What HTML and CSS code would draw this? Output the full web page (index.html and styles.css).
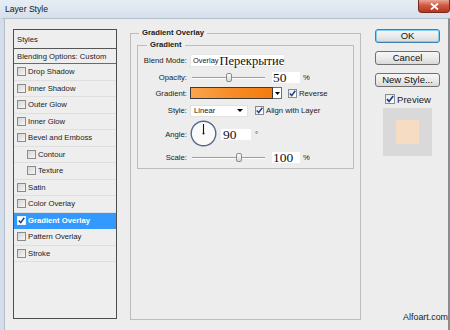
FILE: index.html
```html
<!DOCTYPE html>
<html>
<head>
<meta charset="utf-8">
<link rel="stylesheet" href="styles.css">
</head>
<body>
<div class="window">
  <div class="titlebar">
    <span class="title">Layer Style</span>
    <span class="close"><svg width="9" height="7" viewBox="0 0 9 7"><path d="M1 0.5 L8 6.5 M8 0.5 L1 6.5" stroke="#fff" stroke-width="1.8"/></svg></span>
  </div>
  <div class="frame">
    <div class="styles-list">
      <div class="list-head">Styles</div>
      <div class="list-blend">Blending Options: Custom</div>
      <div class="item"><span class="cb"></span>Drop Shadow</div>
      <div class="item"><span class="cb"></span>Inner Shadow</div>
      <div class="item"><span class="cb"></span>Outer Glow</div>
      <div class="item"><span class="cb"></span>Inner Glow</div>
      <div class="item"><span class="cb"></span>Bevel and Emboss</div>
      <div class="item sub"><span class="cb"></span>Contour</div>
      <div class="item sub"><span class="cb"></span>Texture</div>
      <div class="item"><span class="cb"></span>Satin</div>
      <div class="item"><span class="cb"></span>Color Overlay</div>
      <div class="item selected"><span class="cb on"><svg width="7" height="7" viewBox="0 0 7 7"><path d="M0.8 3.6 L2.7 5.6 L6.3 0.8" fill="none" stroke="#1f3f8f" stroke-width="1.5"/></svg></span>Gradient Overlay</div>
      <div class="item"><span class="cb"></span>Pattern Overlay</div>
      <div class="item"><span class="cb"></span>Stroke</div>
    </div>

    <fieldset class="group outer">
      <legend>Gradient Overlay</legend>
      <fieldset class="group inner">
        <legend>Gradient</legend>
        <div class="row r-blend">
          <span class="lbl">Blend Mode:</span>
          <div class="blend-box"><span class="small">Overlay</span><span class="ru">Перекрытие</span></div>
        </div>
        <div class="row r-opacity">
          <span class="lbl">Opacity:</span>
          <div class="slider"><span class="thumb" style="left:51%"></span></div>
          <span class="num">50</span><span class="unit">%</span>
        </div>
        <div class="row r-gradient">
          <span class="lbl">Gradient:</span>
          <div class="grad"></div>
          <div class="grad-btn"><svg width="5" height="3" viewBox="0 0 5 3"><path d="M0 0 H5 L2.5 3 Z" fill="#000"/></svg></div>
          <span class="cb on rev"><svg width="7" height="7" viewBox="0 0 7 7"><path d="M0.8 3.6 L2.7 5.6 L6.3 0.8" fill="none" stroke="#1f3f8f" stroke-width="1.5"/></svg></span><span class="cbl">Reverse</span>
        </div>
        <div class="row r-style">
          <span class="lbl">Style:</span>
          <div class="select"><span>Linear</span><svg width="6" height="3" viewBox="0 0 6 3"><path d="M0 0 H6 L3 3 Z" fill="#000"/></svg></div>
          <span class="cb on align"><svg width="7" height="7" viewBox="0 0 7 7"><path d="M0.8 3.6 L2.7 5.6 L6.3 0.8" fill="none" stroke="#1f3f8f" stroke-width="1.5"/></svg></span><span class="cbl">Align with Layer</span>
        </div>
        <div class="row r-angle">
          <span class="lbl">Angle:</span>
          <svg class="dial" width="27" height="27" viewBox="0 0 27 27"><circle cx="13.5" cy="13.5" r="12.3" fill="#fafafa" stroke="#56698a" stroke-width="1.4"/><path d="M13.5 13.5 V4" stroke="#111" stroke-width="1.1"/><circle cx="13.5" cy="13.5" r="1" fill="#111"/></svg>
          <span class="num angle">90</span><span class="unit deg">°</span>
        </div>
        <div class="row r-scale">
          <span class="lbl">Scale:</span>
          <div class="slider"><span class="thumb" style="left:64%"></span></div>
          <span class="num">100</span><span class="unit">%</span>
        </div>
      </fieldset>
    </fieldset>

    <div class="side">
      <button class="btn default">OK</button>
      <button class="btn">Cancel</button>
      <button class="btn">New Style...</button>
      <div class="preview"><span class="cb on big"><svg width="8" height="8" viewBox="0 0 7 7"><path d="M0.8 3.6 L2.7 5.6 L6.3 0.8" fill="none" stroke="#1f3f8f" stroke-width="1.5"/></svg></span><span>Preview</span></div>
      <div class="swatch"><div class="swatch-inner"></div></div>
    </div>

    <div class="watermark">Alfoart.com</div>
  </div>
</div>
</body>
</html>
```

FILE: styles.css
```css
* { box-sizing: border-box; }
html, body { margin: 0; padding: 0; }
body {
  width: 450px; height: 330px; overflow: hidden;
  font-family: "Liberation Sans", Arial, sans-serif;
  font-size: 7.7px; color: #1b1b1b; background: #ededed;
}
.window { width: 450px; height: 330px; display: flex; flex-direction: column; }

.titlebar {
  height: 18px; flex: none; display: flex; align-items: flex-start; justify-content: space-between;
  background: linear-gradient(#e7edf4, #d6e0eb);
}
.title { font-size: 8.6px; line-height: 10px; padding: 4px 0 0 5px; color: #151515; }
.close {
  width: 32px; height: 13px; display: flex; align-items: center; justify-content: center;
  border: 1px solid #7a2a1c; border-top: none; border-radius: 0 0 4px 4px;
  background: linear-gradient(#e9a698, #d05a41 45%, #b8341f);
}

.frame {
  flex: 1; position: relative; display: flex; align-items: flex-start;
  padding: 10px 0 0 9px;
  border-left: 4px solid #d3deea; border-top: 1px solid #b3bfcd; border-right: 2px solid #8c8c8c;
  box-shadow: inset 1px 0 0 #b3bfcd;
  background: #ededed;
}

/* styles list */
.styles-list {
  width: 104px; height: 290px; flex: none;
  border: 1px solid #4e4e4e; background: #eeeeee;
}
.list-head { height: 19px; border-bottom: 1px solid #575757; padding-left: 3px; display: flex; align-items: center; }
.list-blend { height: 15px; border-bottom: 1px solid #6a6a6a; padding-left: 3px; display: flex; align-items: center; }
.item {
  height: 16.5px; border-bottom: 1px solid #dfdfdf; padding-left: 3px;
  display: flex; align-items: center; gap: 2px; white-space: nowrap;
}
.item.sub { padding-left: 13px; }
.item.selected { background: #3399ff; color: #fff; font-weight: bold; border-bottom-color: #3399ff; }

.cb {
  width: 9px; height: 9px; flex: none; display: inline-flex; align-items: center; justify-content: center;
  border: 1px solid #8b8b8b; background: linear-gradient(135deg, #d5d5d5, #f6f6f6);
}
.cb.on { background: linear-gradient(135deg, #e9e9e9, #ffffff); }
.selected .cb { border-color: #f0f0f0; background: #fff; }

/* group boxes */
.group { margin: 0; min-inline-size: 0; }
.group legend { font-weight: bold; padding: 0 3px; margin-left: 2px; line-height: 10px; }
.outer {
  flex: none; width: 231px; height: 292px; margin: -1px 0 0 13px;
  border: 1px solid #bdbdbd; padding: 2px 6px 0 6px;
}
.inner {
  width: 100%; height: 129px; border: 1px solid #bdbdbd; padding: 1px 0 0 0;
}
.inner legend { margin-left: 9px; }

.row { display: flex; align-items: center; white-space: nowrap; }
.r-blend { height: 19px; }
.r-opacity { height: 15px; }
.r-gradient { height: 16px; }
.r-style { height: 19px; }
.r-angle { height: 28px; }
.r-scale { height: 18px; }
.lbl { width: 49px; flex: none; text-align: right; margin-right: 3px; }

.blend-box {
  width: 95px; height: 13px; background: #fff; border: 1px solid #e6e6e6;
  display: flex; align-items: center; padding-left: 2px; overflow: visible;
}
.blend-box .small { font-size: 7.4px; }
.blend-box .ru { font-family: "Liberation Serif", "Times New Roman", serif; font-size: 12.5px; line-height: 12px; margin-left: 1px; color: #111; }

.slider {
  position: relative; width: 73px; height: 11px; margin-left: 2px; flex: none;
  background:
    linear-gradient(#9e9e9e, #9e9e9e) 0 5px / 100% 1px no-repeat,
    linear-gradient(#ffffff, #ffffff) 0 6px / 100% 1px no-repeat;
}
.thumb {
  position: absolute; top: 1px; width: 6px; height: 9px; margin-left: -3px;
  border: 1px solid #8c8c8c; border-radius: 2px; background: linear-gradient(#fbfbfb, #d9d9d9);
}
.num {
  width: 28px; height: 11px; flex: none; margin-left: 7px; padding-left: 1px;
  background: #fff; font-family: "Liberation Serif", "Times New Roman", serif;
  font-size: 13.5px; line-height: 11px; color: #111;
}
.num.angle { width: 30px; margin-left: 4px; padding-left: 2px; }
.unit { margin-left: 3px; }
.unit.deg { margin-left: 4px; }

.grad {
  width: 83px; height: 12px; flex: none; border: 1px solid #3a3a3a;
  background: linear-gradient(90deg, #f9a54d, #f68a24 55%, #f47b0e);
}
.grad-btn {
  width: 9px; height: 12px; flex: none; background: #fff; border: 1px solid #6f6f6f; border-left: none;
  display: flex; align-items: center; justify-content: center;
}
.cb.rev { margin-left: 6px; }
.cbl { margin-left: 2px; }

.select {
  width: 58px; height: 12px; flex: none; background: #fff; border: 1px solid #e2e2e2;
  display: flex; align-items: center; justify-content: space-between; padding: 0 4px 0 3px;
}
.cb.align { margin-left: 7px; }

.dial { flex: none; margin-top: -1px; }

/* right column */
.side { width: 65px; margin-left: 14px; flex: none; display: flex; flex-direction: column; align-items: center; }
.btn {
  width: 65px; height: 14px; padding: 0; margin: 0 0 8px 0;
  border: 1px solid #707070; border-radius: 3px;
  background: linear-gradient(#f7f7f7, #ebebeb 50%, #d9d9d9);
  font-family: "Liberation Sans", Arial, sans-serif; font-size: 9.5px; line-height: 12px; color: #111;
}
.btn.default { border-color: #3c7fb1; box-shadow: inset 0 0 0 1px #7fd0f3; }
.preview { display: flex; align-items: center; gap: 2px; height: 10px; font-size: 9.5px; margin-top: -1px; margin-left: 1px; }
.cb.big { width: 10px; height: 10px; }
.swatch {
  width: 49px; height: 48px; margin-top: 4px; background: #d9d9d9;
  display: flex; align-items: center; justify-content: center;
}
.swatch-inner { width: 23px; height: 24px; background: #f5dcc2; }

.watermark {
  position: absolute; right: 0; bottom: 8px;
  font-size: 8.9px; line-height: 10px; color: #222;
}
```
